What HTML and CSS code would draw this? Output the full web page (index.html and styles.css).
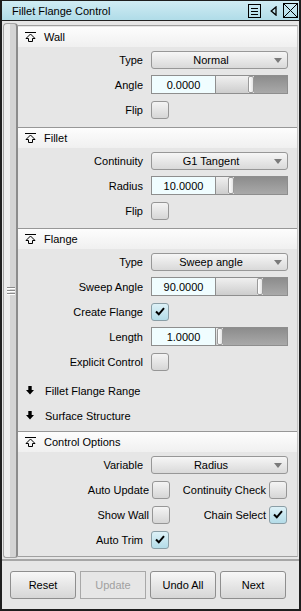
FILE: index.html
```html
<!DOCTYPE html>
<html lang="en">
  <head>
    <meta charset="UTF-8" />
    <title>Fillet Flange Control</title>
    <link rel="stylesheet" href="styles.css">
  </head>
  <body>
    <div class="window">
      <div class="titlebar">
        <span class="title">Fillet Flange Control</span>
        <div class="title-icons">
          <svg class="ico-menu" width="13" height="14" viewBox="0 0 13 14"><rect x="0.5" y="0.5" width="12" height="13" fill="none" stroke="#000"/><path d="M3 4.5h7M3 7.5h7M3 10.5h7" stroke="#000"/></svg>
          <svg class="ico-tri" width="7" height="10" viewBox="0 0 7 10"><path d="M6 0.9 L1.2 5 L6 9.1 Z" fill="none" stroke="#000" stroke-width="1.3"/></svg>
          <svg class="ico-close" width="15" height="15" viewBox="0 0 15 15"><rect x="0.5" y="0.5" width="14" height="14" fill="none" stroke="#000"/><path d="M1 1L14 14M14 1L1 14" stroke="#000"/></svg>
        </div>
      </div>

      <div class="main">
        <div class="handle"><span class="grip"></span></div>

        <div class="panel">
          <!-- Wall -->
          <div class="group first">
            <div class="group-head">
              <svg class="ico-open" width="11" height="10" viewBox="0 0 11 10"><path d="M0 0.5h11" stroke="#000"/><path d="M5.5 2 L10 6.5 L7.5 6.5 L7.5 9.5 L3.5 9.5 L3.5 6.5 L1 6.5 Z" fill="none" stroke="#000"/></svg>
              <span>Wall</span>
            </div>
            <div class="row">
              <label>Type</label>
              <div class="dropdown"><span>Normal</span><i class="arrow"></i></div>
            </div>
            <div class="row">
              <label>Angle</label>
              <div class="spin"><span class="value">0.0000</span><div class="slider"><div class="fill" style="width:32px"></div><div class="thumb"></div><div class="rest"></div></div></div>
            </div>
            <div class="row">
              <label>Flip</label>
              <span class="check"></span>
            </div>
          </div>

          <!-- Fillet -->
          <div class="group">
            <div class="group-head">
              <svg class="ico-open" width="11" height="10" viewBox="0 0 11 10"><path d="M0 0.5h11" stroke="#000"/><path d="M5.5 2 L10 6.5 L7.5 6.5 L7.5 9.5 L3.5 9.5 L3.5 6.5 L1 6.5 Z" fill="none" stroke="#000"/></svg>
              <span>Fillet</span>
            </div>
            <div class="row">
              <label>Continuity</label>
              <div class="dropdown"><span>G1 Tangent</span><i class="arrow"></i></div>
            </div>
            <div class="row">
              <label>Radius</label>
              <div class="spin"><span class="value">10.0000</span><div class="slider"><div class="fill" style="width:12px"></div><div class="thumb"></div><div class="rest"></div></div></div>
            </div>
            <div class="row">
              <label>Flip</label>
              <span class="check"></span>
            </div>
          </div>

          <!-- Flange -->
          <div class="group">
            <div class="group-head">
              <svg class="ico-open" width="11" height="10" viewBox="0 0 11 10"><path d="M0 0.5h11" stroke="#000"/><path d="M5.5 2 L10 6.5 L7.5 6.5 L7.5 9.5 L3.5 9.5 L3.5 6.5 L1 6.5 Z" fill="none" stroke="#000"/></svg>
              <span>Flange</span>
            </div>
            <div class="row">
              <label>Type</label>
              <div class="dropdown"><span>Sweep angle</span><i class="arrow"></i></div>
            </div>
            <div class="row">
              <label>Sweep Angle</label>
              <div class="spin"><span class="value">90.0000</span><div class="slider"><div class="fill" style="width:41px"></div><div class="thumb"></div><div class="rest"></div></div></div>
            </div>
            <div class="row">
              <label>Create Flange</label>
              <span class="check on"><svg width="10" height="9" viewBox="0 0 10 9"><path d="M1 4.5 L3.8 7.3 L9 1.2" fill="none" stroke="#000" stroke-width="2"/></svg></span>
            </div>
            <div class="row">
              <label>Length</label>
              <div class="spin"><span class="value">1.0000</span><div class="slider"><div class="fill" style="width:1px"></div><div class="thumb"></div><div class="rest"></div></div></div>
            </div>
            <div class="row">
              <label>Explicit Control</label>
              <span class="check"></span>
            </div>
            <div class="subs">
              <div class="sub-head">
                <svg class="ico-down" width="8" height="9" viewBox="0 0 8 9"><path d="M2.3 0h3.4v4h2.3L4 8.5 0 4h2.3z" fill="#000"/></svg>
                <span>Fillet Flange Range</span>
              </div>
              <div class="sub-head">
                <svg class="ico-down" width="8" height="9" viewBox="0 0 8 9"><path d="M2.3 0h3.4v4h2.3L4 8.5 0 4h2.3z" fill="#000"/></svg>
                <span>Surface Structure</span>
              </div>
            </div>
          </div>

          <!-- Control Options -->
          <div class="group">
            <div class="group-head">
              <svg class="ico-open" width="11" height="10" viewBox="0 0 11 10"><path d="M0 0.5h11" stroke="#000"/><path d="M5.5 2 L10 6.5 L7.5 6.5 L7.5 9.5 L3.5 9.5 L3.5 6.5 L1 6.5 Z" fill="none" stroke="#000"/></svg>
              <span>Control Options</span>
            </div>
            <div class="row">
              <label>Variable</label>
              <div class="dropdown"><span>Radius</span><i class="arrow"></i></div>
            </div>
            <div class="row pair">
              <div class="cell left"><span>Auto Update</span><span class="check"></span></div>
              <div class="cell right"><span>Continuity Check</span><span class="check"></span></div>
            </div>
            <div class="row pair">
              <div class="cell left"><span>Show Wall</span><span class="check"></span></div>
              <div class="cell right"><span>Chain Select</span><span class="check on"><svg width="10" height="9" viewBox="0 0 10 9"><path d="M1 4.5 L3.8 7.3 L9 1.2" fill="none" stroke="#000" stroke-width="2"/></svg></span></div>
            </div>
            <div class="row">
              <label>Auto Trim</label>
              <span class="check on"><svg width="10" height="9" viewBox="0 0 10 9"><path d="M1 4.5 L3.8 7.3 L9 1.2" fill="none" stroke="#000" stroke-width="2"/></svg></span>
            </div>
          </div>
        </div>
      </div>

      <div class="buttons">
        <button class="btn">Reset</button>
        <button class="btn disabled">Update</button>
        <button class="btn">Undo All</button>
        <button class="btn">Next</button>
      </div>
    </div>
  </body>
</html>
```

FILE: styles.css
```css
/* Fillet Flange Control panel */
* {
  box-sizing: border-box;
}

body {
  margin: 0;
  font-family: "Liberation Sans", Arial, sans-serif;
  font-size: 11px;
  color: #000;
  background: #fff;
}

.window {
  width: 301px;
  height: 611px;
  border: 2px solid #1e1e1e;
  border-top-width: 1px;
  background: #e6e6e6;
  display: flex;
  flex-direction: column;
}

.titlebar {
  flex: none;
  height: 20px;
  display: flex;
  align-items: center;
  padding-left: 10px;
  padding-right: 1px;
  background: linear-gradient(#d0ecf4, #b0dce8);
  border-bottom: 1px solid #222;
}

.title {
  font-size: 11px;
}

.title-icons {
  margin-left: auto;
  display: flex;
  align-items: center;
}

.ico-menu {
  margin-right: 9px;
}

.ico-tri {
  margin-right: 6px;
}

.main {
  flex: none;
  height: 540px;
  display: flex;
  padding-top: 2px;
  border-bottom: 2px solid #a6a6a6;
}

.handle {
  width: 15px;
  height: 535px;
  margin-left: 1px;
  border: 1px solid #a4a4a4;
  border-right: 2px solid #8c8c8c;
  border-radius: 4px 4px 3px 3px;
  background: linear-gradient(to right, #ececec 0 6px, #d4d4d4 6px);
  display: flex;
  align-items: center;
  justify-content: center;
}

.grip {
  width: 8px;
  height: 8px;
  margin-left: 1px;
  background: linear-gradient(#8a8a8a 0 1px, #fff 1px 2px, transparent 2px 3px, #8a8a8a 3px 4px, #fff 4px 5px, transparent 5px 6px, #8a8a8a 6px 7px, #fff 7px 8px);
}

.panel {
  width: 280px;
  height: 532px;
  margin-top: 2px;
  padding-top: 1px;
  border-top: 1px solid #a0a0a0;
  border-right: 1px solid #c4c4c4;
  border-bottom: 1px solid #a0a0a0;
}

.group {
  border-top: 1px solid #979797;
  padding-bottom: 5px;
}

.group.first {
  border-top: none;
}

.group-head {
  height: 20px;
  display: flex;
  align-items: center;
  padding-left: 7px;
  background: linear-gradient(#fdfdfd, #f0f0f0);
}

.group-head span {
  margin-left: 8px;
}

.row {
  height: 25px;
  display: flex;
  align-items: center;
}

.row label {
  width: 125px;
  margin-right: 8px;
  text-align: right;
}

.dropdown {
  width: 137px;
  height: 18px;
  display: flex;
  align-items: center;
  justify-content: center;
  position: relative;
  padding-right: 17px;
  border: 1px solid #979797;
  border-radius: 3px;
  background: linear-gradient(#f6f6f6, #d9d9d9);
}

.dropdown .arrow {
  position: absolute;
  right: 5px;
  top: 6px;
  width: 0;
  height: 0;
  border-left: 4px solid transparent;
  border-right: 4px solid transparent;
  border-top: 5px solid #7a7a7a;
}

.spin {
  width: 137px;
  height: 19px;
  display: flex;
  border: 1px solid #8e8e8e;
}

.spin .value {
  width: 64px;
  border-right: 1px solid #8e8e8e;
  background: #f0fdff;
  display: flex;
  align-items: center;
  justify-content: center;
}

.slider {
  flex: 1;
  display: flex;
}

.slider .fill {
  background: linear-gradient(#f0f0f0, #cdcdcd);
}

.slider .thumb {
  width: 6px;
  border: 1px solid #9a9a9a;
  border-radius: 2px;
  background: linear-gradient(to right, #ffffff, #e4e4e4);
}

.slider .rest {
  flex: 1;
  background: linear-gradient(#8c8c8c, #a9a9a9);
}

.check {
  width: 18px;
  height: 18px;
  border: 1px solid #969696;
  border-radius: 3px;
  background: linear-gradient(#f4f4f4, #d6d6d6);
  display: flex;
  align-items: center;
  justify-content: center;
}

.check.on {
  background: linear-gradient(#ddf1f7, #b4dce8);
  border-color: #8a9ea6;
}

.subs {
  padding-top: 4px;
  margin-bottom: -2px;
}

.sub-head {
  height: 25px;
  display: flex;
  align-items: center;
  padding-left: 8px;
}

.sub-head span {
  margin-left: 11px;
}

.pair .cell {
  display: flex;
  align-items: center;
  justify-content: flex-end;
  gap: 3px;
}

.pair .left {
  width: 152px;
}

.pair .right {
  width: 117px;
}

.buttons {
  flex: none;
  height: 48px;
  display: flex;
  gap: 4px;
  padding: 10px 0 0 8px;
}

.btn {
  width: 66px;
  height: 28px;
  font-family: "Liberation Sans", Arial, sans-serif;
  font-size: 11px;
  color: #000;
  border: 1px solid #8e8e8e;
  border-radius: 3px;
  background: linear-gradient(#f7f7f7, #d6d6d6);
  padding: 0;
}

.btn.disabled {
  color: #a0a0a0;
  border-color: #a8a8a8;
  border-radius: 0;
  background: #e6e6e6;
}
```
